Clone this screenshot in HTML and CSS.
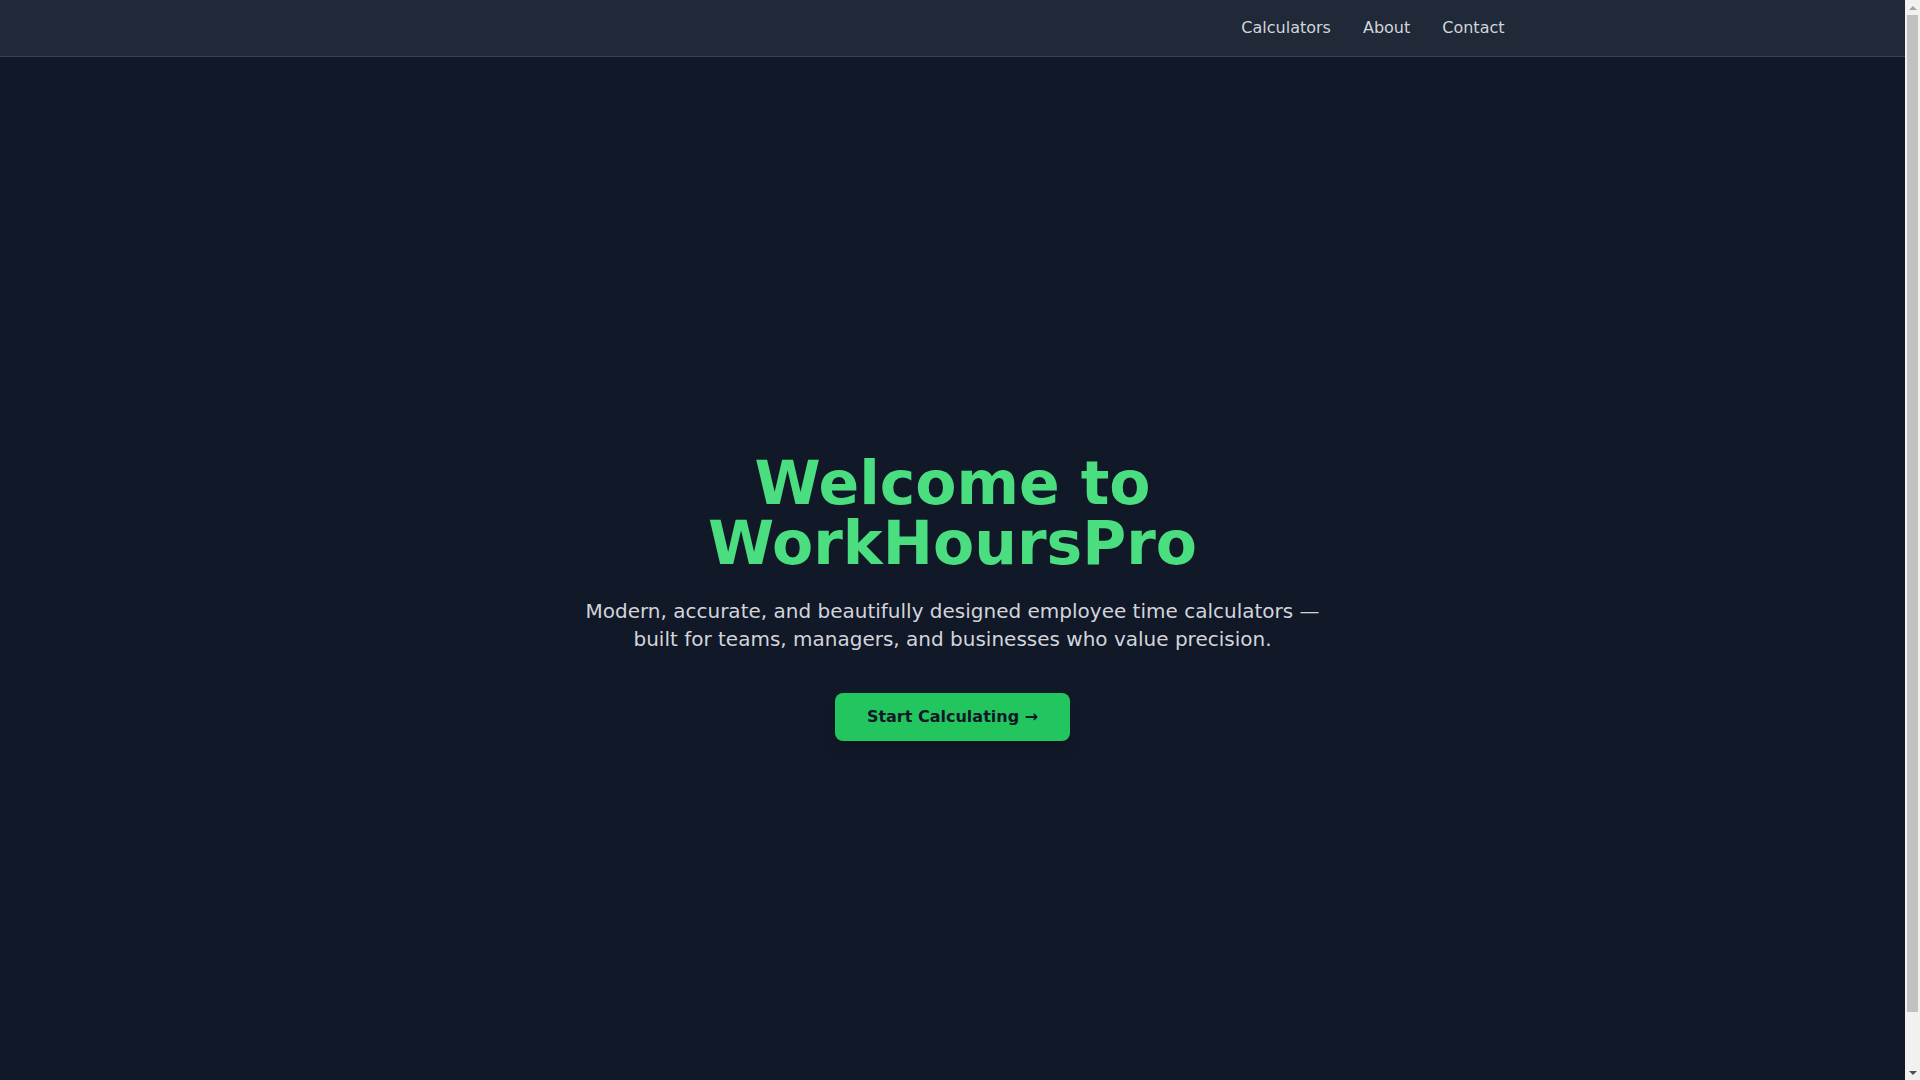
FILE: index.html
```html
<!DOCTYPE html>
<html lang="en">
<head>
  <meta charset="UTF-8">
  <meta name="viewport" content="width=device-width, initial-scale=1.0">
  <title>WorkHoursPro</title>
  <link rel="stylesheet" href="styles.css">
</head>
<body>

  <nav class="topbar">
    <div class="topbar-inner">
      <ul class="nav-links">
        <li><a href="#calculators">Calculators</a></li>
        <li><a href="#about">About</a></li>
        <li><a href="#contact">Contact</a></li>
      </ul>
    </div>
  </nav>

  <section class="hero">
    <div class="hero-content">
      <h1 class="hero-title">Welcome to WorkHoursPro</h1>
      <p class="hero-text">Modern, accurate, and beautifully designed employee time calculators — built for teams, managers, and businesses who value precision.</p>
      <a href="#calculators" class="cta-button">Start Calculating →</a>
    </div>
  </section>

  <!-- classic scrollbar gutter -->
  <div class="scrollbar" aria-hidden="true">
    <span class="scroll-arrow scroll-up"></span>
    <span class="scroll-thumb"></span>
    <span class="scroll-arrow scroll-down"></span>
  </div>

</body>
</html>
```

FILE: styles.css
```css
* {
  box-sizing: border-box;
}

body {
  font-family: 'DejaVu Sans', sans-serif;
  margin: 0;
  padding: 0 15px 0 0;
  background-color: #111827;
  color: #d1d5db;
}

.topbar {
  background-color: #1f2937;
  border-bottom: 1px solid #374151;
  height: 57px;
}

.topbar-inner {
  max-width: 1152px;
  height: 100%;
  margin: 0 auto;
  padding: 0 24px;
  display: flex;
  align-items: center;
  justify-content: flex-end;
}

.nav-links {
  list-style-type: none;
  margin: 0;
  padding: 0;
  display: flex;
  gap: 32px;
}

.nav-links a {
  color: #d1d5db;
  text-decoration: none;
  font-size: 16px;
  line-height: 24px;
}

.nav-links a:hover {
  color: #4ade80;
}

.hero {
  height: 100vh;
  display: flex;
  align-items: center;
  justify-content: center;
  padding: 0 24px;
  text-align: center;
}

.hero-content {
  max-width: 768px;
}

.hero-title {
  font-size: 60px;
  line-height: 60px;
  font-weight: bold;
  color: #4ade80;
  margin: 0 0 24px;
}

.hero-text {
  font-size: 20px;
  line-height: 28px;
  color: #d1d5db;
  margin: 0 0 40px;
}

.cta-button {
  display: inline-block;
  padding: 12px 32px;
  font-size: 16px;
  line-height: 24px;
  font-weight: bold;
  background-color: #22c55e;
  color: #111827;
  text-decoration: none;
  border-radius: 8px;
  box-shadow: 0 10px 15px -3px rgba(0, 0, 0, 0.1), 0 4px 6px -4px rgba(0, 0, 0, 0.1);
  transition: background-color 0.3s;
}

.cta-button:hover {
  background-color: #16a34a;
}

.scrollbar {
  position: fixed;
  top: 0;
  right: 0;
  width: 15px;
  height: 100vh;
  background-color: #f1f1f1;
  display: flex;
  flex-direction: column;
  align-items: center;
}

.scroll-arrow {
  height: 15px;
  width: 15px;
  display: flex;
  align-items: center;
  justify-content: center;
}

.scroll-arrow::before {
  content: "";
  border-left: 4px solid transparent;
  border-right: 4px solid transparent;
}

.scroll-up::before {
  border-bottom: 4px solid #a3a3a3;
}

.scroll-down {
  margin-top: auto;
}

.scroll-down::before {
  border-top: 4px solid #505050;
}

.scroll-thumb {
  width: 11px;
  height: 997px;
  background-color: #c1c1c1;
}
```
